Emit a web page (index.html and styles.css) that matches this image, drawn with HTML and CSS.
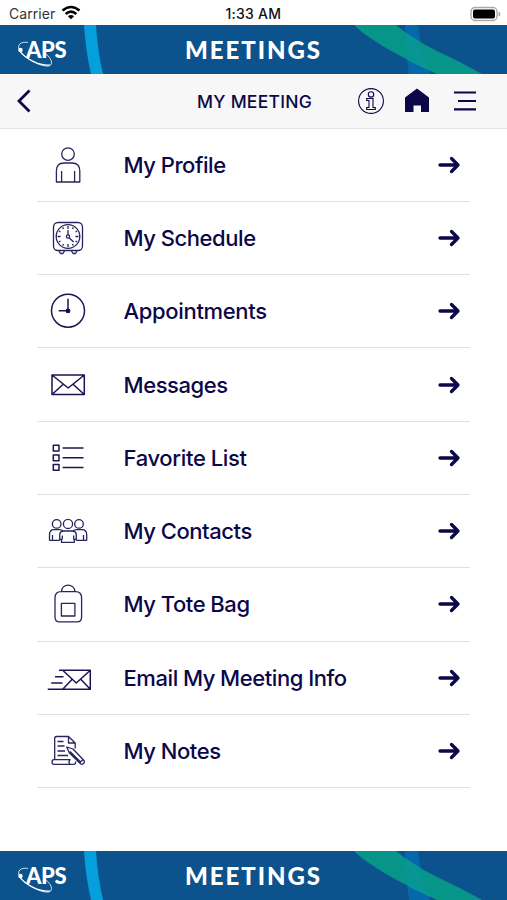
FILE: index.html
```html
<!DOCTYPE html>
<html lang="en">
<head>
<meta charset="utf-8">
<title>My Meeting</title>
<link rel="stylesheet" href="styles.css">
</head>
<body>
<svg class="defs" width="0" height="0">
  <defs>
    <symbol id="arrow" viewBox="0 0 24 20"><path d="M3 10H21M14.500 3.500L21 10L14.500 16.500" fill="none" stroke="currentColor" stroke-width="3.300" stroke-linecap="round" stroke-linejoin="round"/></symbol>
    <symbol id="art" viewBox="0 0 507 49">
      <path d="M84 0H96Q97.500 25 103 49H91Q85.500 25 84 0Z" fill="#049fdc"/>
      <path d="M405 0H418Q421 26 430 49H409Q405 25 405 0Z" fill="#0468aa"/>
      <path d="M354 0H396Q411 13 437 26Q459 36 482 49H437Q390 27 372 14Q362 8 354 0Z" fill="#07958a"/>
      <path d="M405 7Q413 12 419 16Q423 32 430 46L409 36Q405 20 405 7Z" fill="#079596"/>
      <g fill="none" stroke="#fff" stroke-width=".8"><path d="M28 17.500C21 16 16 20 20 26C25 34 41 42 49 41C54 39 51 33 46 29"/><path d="M19 25C25 34 40 41 50 40" stroke-width="1.200"/></g>
      <circle cx="20.500" cy="25" r="2.200" fill="#fff"/>
    </symbol>
  </defs>
</svg>
<div class="screen">
  <div class="status">
    <span class="carrier">Carrier</span>
    <svg class="wifi" width="20" height="15" viewBox="0 0 20 15"><g fill="none" stroke="#000" stroke-width="2.600"><path d="M1.500 5.500Q10 -1.500 18.500 5.500"/><path d="M4.700 8.900Q10 4.400 15.300 8.900"/></g><path d="M6.900 11.200Q10 8.800 13.100 11.200L10 14.300Z"/></svg>
    <span class="time">1:33 AM</span>
    <svg class="battery" width="32" height="16" viewBox="0 0 32 16"><rect x="1" y="1.500" width="26" height="13" rx="4" fill="#fff" stroke="#aaa" stroke-width="1.400"/><rect x="3" y="3.500" width="22" height="9" rx="2"/><path d="M28.500 5.500Q30.500 6 30.500 8T28.500 10.500Z" fill="#aaa"/></svg>
  </div>
  <header class="banner">
    <svg class="art" width="507" height="49"><use href="#art"/></svg>
    <span class="logo">APS</span><span class="brand">MEETINGS</span>
  </header>
  <nav class="nav">
    <svg class="back" width="16" height="24" viewBox="0 0 16 24"><path d="M14.500 1.500L4 12L14.500 22.500" fill="none" stroke="currentColor" stroke-width="2.800"/></svg>
    <h1 class="title">MY MEETING</h1>
    <svg width="28" height="28" viewBox="0 0 28 28"><g fill="none" stroke="currentColor" stroke-width="1.100"><circle cx="14" cy="14" r="12.400"/><circle cx="14" cy="7.400" r="2.700"/><path d="M9.700 11.500H16V20.500H18.300V22.500H9.700V20.500H12V13.500H9.700Z"/></g></svg>
    <svg class="home" width="26" height="26" viewBox="0 0 26 26"><path d="M13 .5L25 9.500V24H17V17.500H9.500V24H1V9.500Z" fill="currentColor"/></svg>
    <svg class="menu" width="24" height="20" viewBox="0 0 24 20"><path d="M1 1.500H23M5 10H23M1 18.300H23" stroke="currentColor" stroke-width="2.200"/></svg>
  </nav>
  <main class="list">
    <a class="row"><svg class="icon" viewBox="0 0 50 50"><circle cx="25" cy="14.100" r="6.300"/><path d="M13.400 42V31Q13.400 23 21 23H29Q36.800 23 36.800 31V42ZM18.600 31V42M31.600 31V42"/></svg><span class="label">My Profile</span><svg class="arrow"><use href="#arrow"/></svg></a>
    <a class="row"><svg class="icon" viewBox="0 0 50 50"><rect x="10.500" y="9.500" width="29" height="28" rx="4.500"/><circle cx="25" cy="23.500" r="11.800"/><path d="M25 13V16M25 31V34M14.500 23.500H17.500M32.500 23.500H35.500M19.700 14.400L20.500 16M30.300 14.400L29.500 16M15.900 18.200L17.500 19M34.100 18.200L32.500 19M15.900 28.800L17.500 28M34.100 28.800L32.500 28M19.700 32.600L20.500 31M30.300 32.600L29.500 31M25 17V22M26 24.700L30.700 29M16 38L17.500 40.500H20L21.500 38M28.500 38L30 40.500H32.500L34 38"/><circle cx="25" cy="23.500" r="1.600"/></svg><span class="label">My Schedule</span><svg class="arrow"><use href="#arrow"/></svg></a>
    <a class="row"><svg class="icon bold" viewBox="0 0 50 50"><circle cx="25" cy="24.700" r="16.500"/><path d="M25 12.700V24.700H15.700"/><circle class="solid" cx="25" cy="24.900" r="1.700"/></svg><span class="label wide">Appointments</span><svg class="arrow"><use href="#arrow"/></svg></a>
    <a class="row"><svg class="icon bold" viewBox="0 0 50 50"><path d="M9 15H41.300V34.500H9ZM9 15L25.200 28L41.300 15M9 34.500L20 24.500M41.300 34.500L30.300 24.500"/></svg><span class="label">Messages</span><svg class="arrow"><use href="#arrow"/></svg></a>
    <a class="row"><svg class="icon bold" viewBox="0 0 50 50"><path d="M10.300 12.300H16V18H10.300ZM10.300 22H16V27.700H10.300ZM10.300 31.600H16V37.300H10.300ZM19.600 15H40.500M19.600 24.700H40.500M19.600 34.500H40.500"/></svg><span class="label wide">Favorite List</span><svg class="arrow"><use href="#arrow"/></svg></a>
    <a class="row"><svg class="icon" viewBox="0 0 50 50"><circle cx="13.700" cy="17.900" r="4.300"/><circle cx="25" cy="17.900" r="4.600"/><circle cx="36" cy="17.900" r="4.300"/><path d="M18.500 36.400V33.500H16.700V29Q16.700 25 21 25H29Q33.300 25 33.300 29V33.500H31.300V36.400ZM19.300 29.500V33.500M30.700 29.500V33.500M16.700 34.300H6.500V29Q6.500 23.700 11 23.700H16Q19 23.700 20 25M33.300 34.300H43.700V29Q43.700 23.700 39 23.700H34Q31 23.700 30 25M9.500 29V34M40.500 29V34"/></svg><span class="label">My Contacts</span><svg class="arrow"><use href="#arrow"/></svg></a>
    <a class="row"><svg class="icon" viewBox="0 0 50 50"><path d="M18.500 12.700C19 3.800 31 3.800 32 12.700M12 19Q12 12.700 18 12.700H32.500Q38.600 12.700 38.600 19V38Q38.600 42.900 34 42.900H16.500Q12 42.900 12 38ZM18.400 24.400H31.900V37H18.400Z"/></svg><span class="label">My Tote Bag</span><svg class="arrow"><use href="#arrow"/></svg></a>
    <a class="row"><svg class="icon bold" viewBox="0 0 50 50"><path d="M16 17.300H47.300V36.300H4.700M19.700 17.300L33.300 30L47.300 17.300M19.700 36.300L29 26.500M47.300 36.300L38 26.500M12 23.700H20.500M8.300 30H19.500"/></svg><span class="label">Email My Meeting Info</span><svg class="arrow"><use href="#arrow"/></svg></a>
    <a class="row"><svg class="icon" viewBox="0 0 50 50"><path d="M11.700 33.500V12.500Q11.700 10.500 13.500 10.500H25.500L32.200 17V22.500M25.500 10.500V17H32.200M11 33.700H27Q25 36 27 38.300H11Q9 38.300 9 36T11 33.700ZM27 38.300H31.500Q33 37.500 32.500 35.500M14.500 15.500H20.500M14.500 20H21.500M14.500 25H22M14.500 29.500H25M23.700 21L30 23L41 34.500Q42 36 40.500 37.500T37.500 37.800L26.500 27ZM27 25.500L38 36.500M36 37L40.300 33.500"/></svg><span class="label">My Notes</span><svg class="arrow"><use href="#arrow"/></svg></a>
  </main>
  <footer class="banner">
    <svg class="art" width="507" height="49"><use href="#art"/></svg>
    <span class="logo">APS</span><span class="brand">MEETINGS</span>
  </footer>
</div>
</body>
</html>
```
FILE: styles.css
```css
* { box-sizing: border-box; }
body { margin: 0; background: #fff; font-family: Inter, sans-serif; color: #0b0748; }
.defs { display: block; }
.screen { width: 507px; height: 900px; display: flex; flex-direction: column; overflow: hidden; }
.status { height: 25px; flex: none; display: grid; grid-template-columns: 52px 1fr 80px 1fr 32px; align-items: center; padding: 2px 5px 0 9px; color: #111; font-size: 14px; }
.carrier { letter-spacing: .05px; color: #333; }
.wifi { margin-bottom: 2px; }
.time { font-weight: 550; font-size: 14px; letter-spacing: .25px; white-space: nowrap; grid-column: 3; }
.battery { grid-column: 5; }
.banner { position: relative; height: 49px; flex: none; background: #0c538d; color: #fff; display: flex; align-items: center; font-family: Lato, sans-serif; font-weight: 900; }
.art { position: absolute; inset: 0; }
.logo { position: relative; width: 159px; padding-left: 26px; font-size: 22px; letter-spacing: -.4px; line-height: 49px; }
.brand { position: relative; margin-left: 26px; font-size: 24px; letter-spacing: 1.950px; line-height: 50px; }
.nav { height: 54.700px; flex: none; display: flex; align-items: center; background: #f7f7f7; border-bottom: 1px solid #e4e4e4; padding-left: 15px; }
.title { margin: 2px 45px 0 166px; width: 115px; font-size: 17.500px; font-weight: 500; white-space: nowrap; letter-spacing: .27px; }
.home { margin: 0 23px 0 19px; }
.nav svg { flex: none; }
.list { margin: 0 37px; flex: none; }
.row { height: 73.280px; display: grid; grid-template-columns: 86px 1fr 24px; align-items: center; border-bottom: 1px solid #e0e0e0; padding-right: 9px; }
.icon { width: 50px; height: 50px; margin-left: 6px; fill: none; stroke: #28245e; stroke-width: 1.300; stroke-linejoin: round; }
.icon.bold { stroke: #1a1654; stroke-width: 1.500; }
.icon .solid { fill: #0b0748; }
.label { padding-left: .5px; font-size: 22px; font-weight: 550; letter-spacing: -.42px; word-spacing: -.3px; white-space: nowrap; }
.label.wide { letter-spacing: -.33px; }
.arrow { width: 24px; height: 20px; }
footer.banner { margin-top: auto; }
```
